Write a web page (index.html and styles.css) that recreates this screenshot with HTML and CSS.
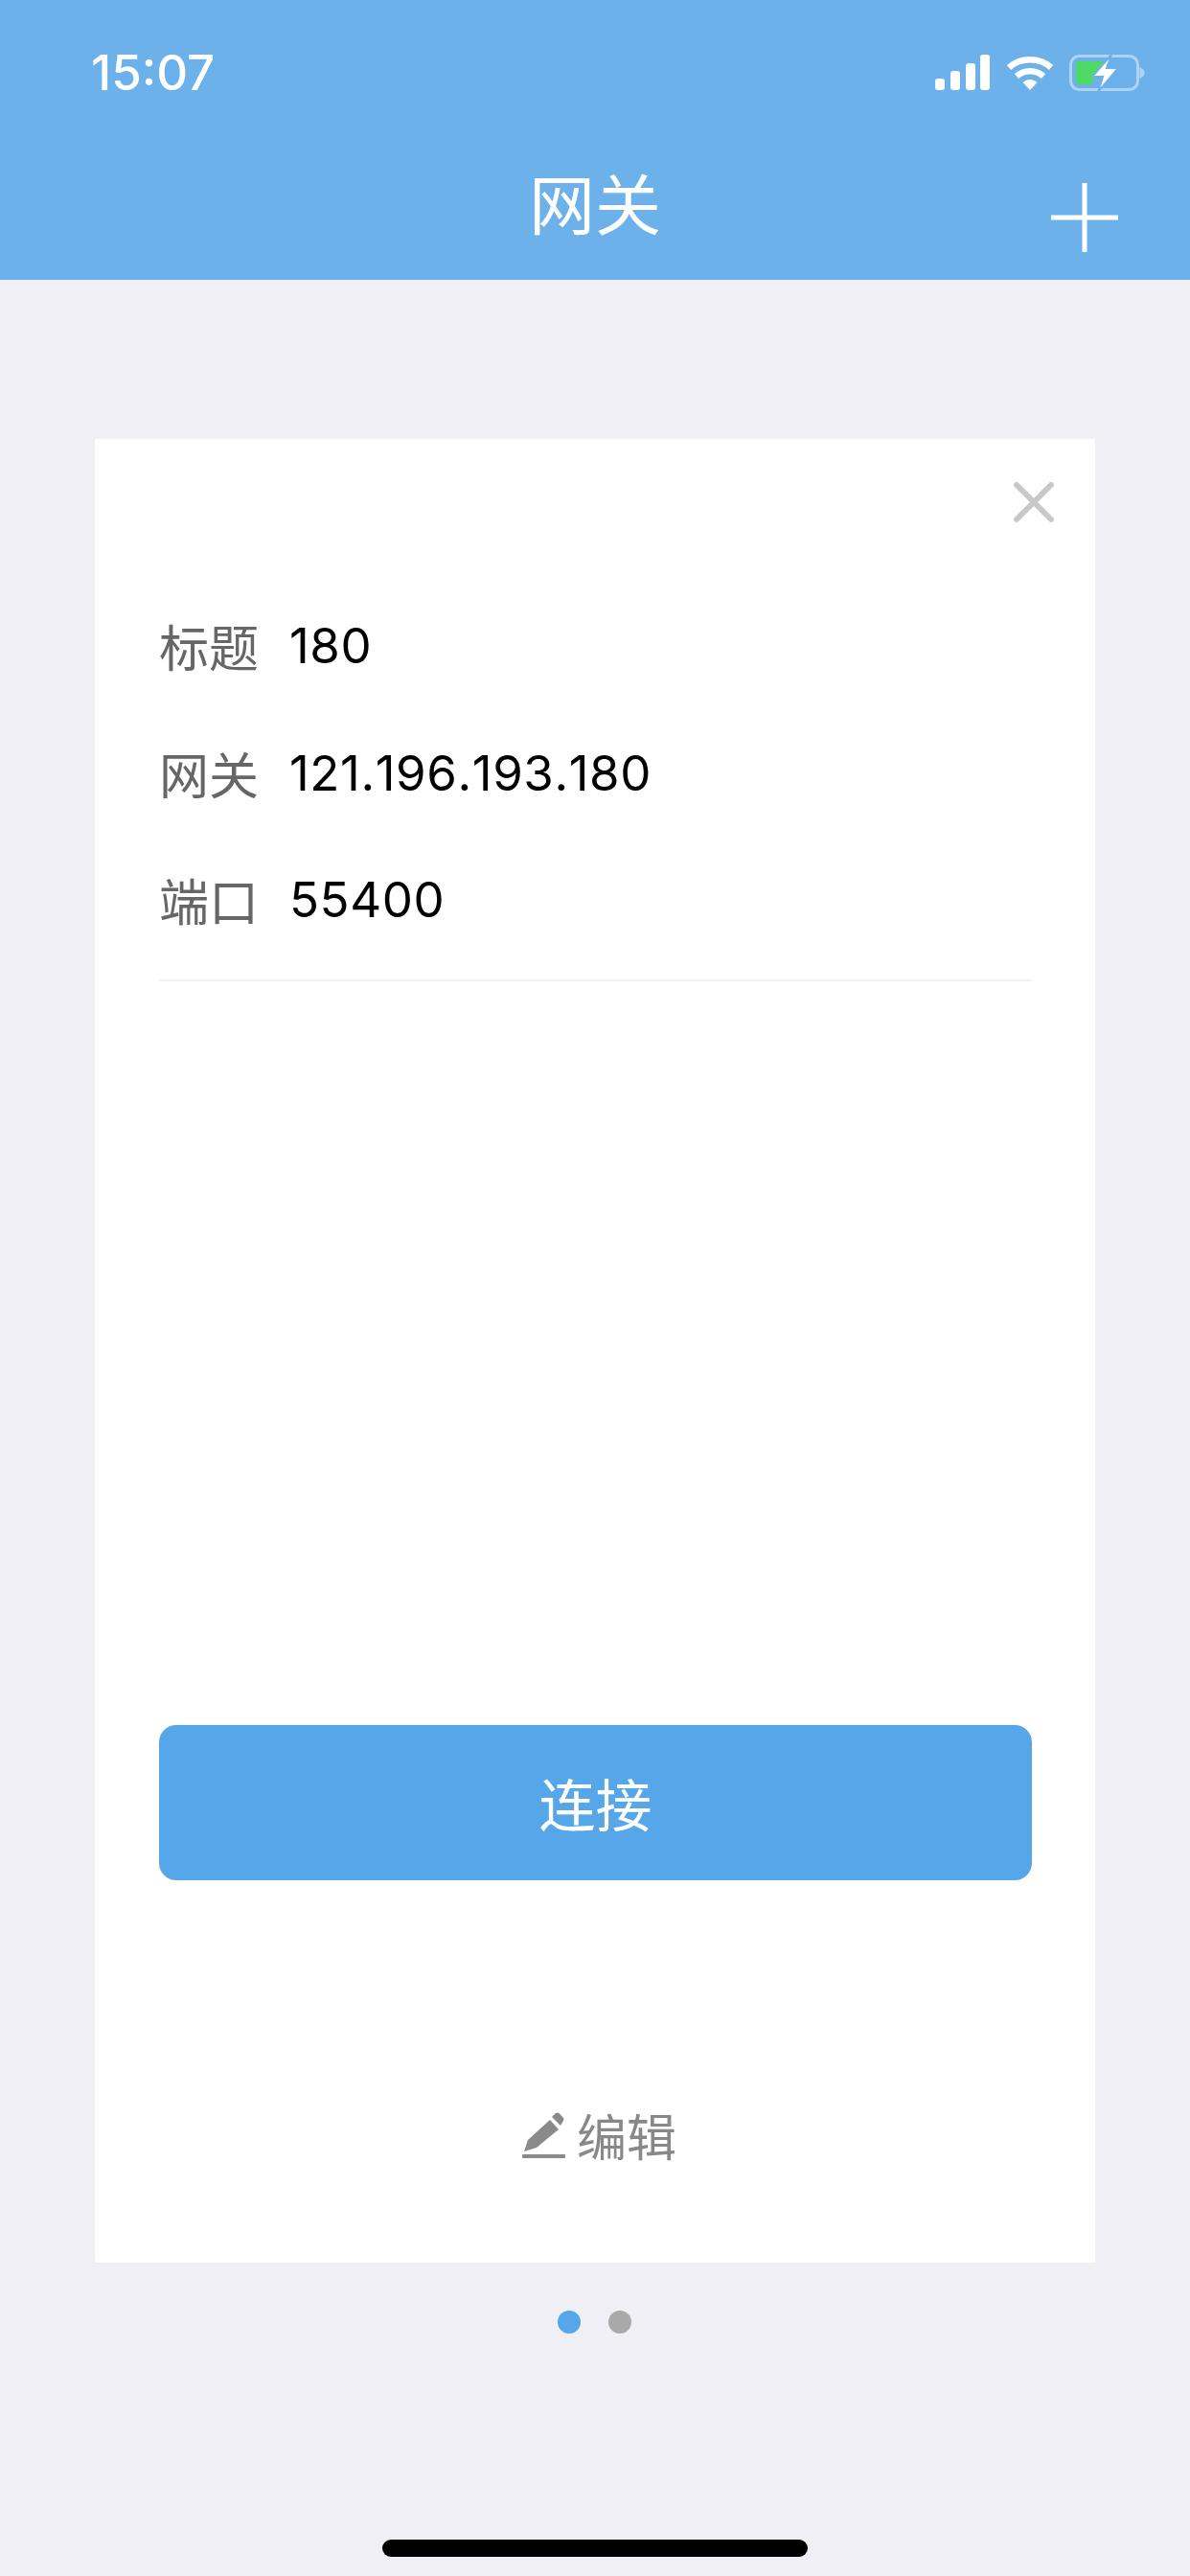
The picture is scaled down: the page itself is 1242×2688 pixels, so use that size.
FILE: index.html

```html
<!DOCTYPE html>
<html>
<head>
	<title>网关</title>
	<meta charset="UTF-8">
	<link rel="stylesheet" href="styles.css">
</head>
<body>
	<div id="screen">
		<header class="topbar">
			<div class="status">
				<span class="time">15:07</span>
				<div class="status-icons">
					<svg width="58" height="38" viewBox="0 0 58 38"><g fill="#fff"><rect x="0" y="25" width="10" height="12" rx="3"/><rect x="16" y="17" width="10" height="20" rx="3"/><rect x="32" y="9" width="10" height="28" rx="3"/><rect x="47" y="0" width="10" height="37" rx="3"/></g></svg>
					<svg width="50" height="38" viewBox="0 0 50 38"><g fill="none" stroke="#fff" stroke-width="6.5"><path d="M3 13.500C15 2.500 35 2.500 47 13.500"/><path d="M11 22.500C19 15.500 31 15.500 39 22.500"/></g><path fill="#fff" d="M17.500 29C22 25 28 25 32.500 29L25 37Z"/></svg>
					<svg width="80" height="40" viewBox="0 0 80 40"><rect x="1.500" y="2.500" width="70" height="35" rx="9" fill="none" stroke="#fff" stroke-opacity=".45" stroke-width="3"/><path d="M73.500 14c3 1 5 3 5 6s-2 5-5 6z" fill="#fff" fill-opacity=".45"/><path d="M10 8h26l-13 24H10q-3 0-3-3V11q0-3 3-3z" fill="#4cd964"/><path d="M44 1L24 24h11l-5 16 21-25H39z" fill="#fff" stroke="#6db1ea" stroke-width="2"/></svg>
				</div>
			</div>
			<div class="nav">
				<span></span>
				<h1 class="nav-title">网关</h1>
				<svg class="plus" width="70" height="72" viewBox="0 0 70 72"><path d="M35 0V72M0 36H70" stroke="#fff" stroke-width="5"/></svg>
			</div>
		</header>

		<div class="card">
			<div class="card-close">
				<svg width="42" height="42" viewBox="0 0 42 42"><path d="M3 3L39 39M39 3L3 39" stroke="#c8c8c8" stroke-width="6" stroke-linecap="round"/></svg>
			</div>
			<div class="fields">
				<div class="field"><span class="field-label">标题</span><span class="field-value">180</span></div>
				<div class="field"><span class="field-label">网关</span><span class="field-value">121.196.193.180</span></div>
				<div class="field"><span class="field-label">端口</span><span class="field-value">55400</span></div>
			</div>
			<button class="connect">连接</button>
			<div class="edit">
				<svg width="46" height="50" viewBox="0 0 46 50"><g fill="#8a8a8a"><path d="M2 42L6 30L29 9L38 19L15 38Z"/><path d="M31 6L35 2Q37 1 38.500 2L43 7Q44 9 43 10L40 15Z"/><rect x="0" y="45" width="45" height="4" rx="1"/></g></svg>
				<span>编辑</span>
			</div>
		</div>

		<div class="dots">
			<span class="dot dot-active"></span>
			<span class="dot"></span>
		</div>

		<div class="home-bar"></div>
	</div>
</body>
</html>
```

FILE: styles.css

```css
body {
	margin: 0;
	background: #efeff5;
	font-family: "Inter", "Noto Sans CJK SC", sans-serif;
}

#screen {
	width: 1242px;
	height: 2688px;
	display: flex;
	flex-direction: column;
	overflow: hidden;
}

.topbar {
	height: 292px;
	flex: none;
	background: #6db1ea;
	color: #fff;
	box-sizing: border-box;
	padding-top: 56px;
}

.status {
	height: 40px;
	display: flex;
	justify-content: space-between;
	align-items: center;
	padding: 0 46px 0 95px;
}

.time {
	font-size: 51px;
	font-weight: 500;
	line-height: 40px;
}

.status-icons {
	display: flex;
	align-items: center;
	gap: 16px;
}

.nav {
	display: grid;
	grid-template-columns: 1fr auto 1fr;
	align-items: start;
	margin-top: 79px;
	padding-right: 75px;
	padding-left: 75px;
}

.nav-title {
	margin: 0;
	font: 400 69px/70px "Noto Sans CJK SC", sans-serif;
}

.plus {
	justify-self: end;
	margin-top: 16px;
}

.card {
	width: 1044px;
	height: 1903px;
	margin: 166px 0 0 99px;
	box-sizing: border-box;
	padding: 0 66px 0 67px;
	background: #fff;
	display: flex;
	flex-direction: column;
}

.card-close {
	display: flex;
	justify-content: flex-end;
	padding: 45px 0 0 0;
	margin-right: -23px;
	height: 64px;
}

.fields {
	margin-top: 41px;
	padding-bottom: 16px;
	border-bottom: 2px solid #f1f1f1;
}

.field {
	height: 132.500px;
	display: flex;
	align-items: center;
	gap: 32px;
}

.field-label {
	font: 400 52px/60px "Noto Sans CJK SC", sans-serif;
	color: #666;
}

.field-value {
	font-size: 51px;
	line-height: 60px;
	font-kerning: none;
	letter-spacing: .6px;
	color: #000;
}

.connect {
	height: 162px;
	margin-top: 776px;
	border: none;
	border-radius: 18px;
	background: #55a7ea;
	color: #fff;
	font: 400 59px/70px "Noto Sans CJK SC", sans-serif;
	padding: 0;
}

.edit {
	margin-top: 236px;
	padding-left: 8px;
	display: flex;
	justify-content: center;
	align-items: center;
	gap: 11px;
	color: #888;
	font: 400 52px/60px "Noto Sans CJK SC", sans-serif;
}

.dots {
	display: flex;
	justify-content: center;
	gap: 29px;
	margin-top: 50px;
	padding-right: 1px;
}

.dot {
	width: 24px;
	height: 24px;
	border-radius: 50%;
	background: #a9a9a9;
}

.dot-active {
	background: #55a7ea;
}

.home-bar {
	width: 444px;
	height: 18px;
	margin: 215px auto 0;
	border-radius: 9px;
	background: #000;
}
```
